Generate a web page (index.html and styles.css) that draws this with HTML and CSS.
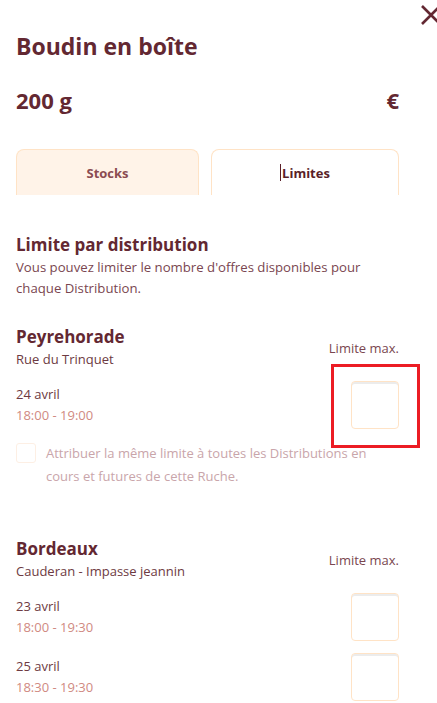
FILE: index.html
```html
<!DOCTYPE html>
<html lang="fr">
<head>
    <meta charset="UTF-8">
    <meta name="viewport" content="width=device-width, initial-scale=1.0">
    <title>Boudin en boîte</title>
    <link rel="stylesheet" href="styles.css">
</head>
<body>
    <button class="close-button" aria-label="Fermer">
        <svg width="26" height="26" viewBox="0 0 26 26">
            <path d="M4 4 L22 22 M22 4 L4 22" stroke="#632832" stroke-width="2.6" fill="none"/>
        </svg>
    </button>

    <div class="panel">
        <h1 class="product-title">Boudin en boîte</h1>
        <div class="price-row">
            <span>200 g</span>
            <span>€</span>
        </div>

        <div class="tabs">
            <div class="tab">Stocks</div>
            <div class="tab tab-active"><span class="caret"></span>Limites</div>
        </div>

        <h2 class="section-title">Limite par distribution</h2>
        <p class="section-text">Vous pouvez limiter le nombre d'offres disponibles pour chaque Distribution.</p>

        <div class="hive">
            <div class="hive-head">
                <div>
                    <div class="hive-name">Peyrehorade</div>
                    <div class="hive-address">Rue du Trinquet</div>
                </div>
                <div class="limit-label">Limite max.</div>
            </div>
            <div class="sale-row">
                <div>
                    <div class="sale-date">24 avril</div>
                    <div class="sale-time">18:00 - 19:00</div>
                </div>
                <div class="limit-box highlighted">
                    <input type="text" class="limit-input">
                </div>
            </div>
            <label class="same-limit">
                <span class="fake-check"></span>
                <span>Attribuer la même limite à toutes les Distributions en cours et futures de cette Ruche.</span>
            </label>
        </div>

        <div class="hive hive-second">
            <div class="hive-head">
                <div>
                    <div class="hive-name">Bordeaux</div>
                    <div class="hive-address">Cauderan - Impasse jeannin</div>
                </div>
                <div class="limit-label">Limite max.</div>
            </div>
            <div class="sale-row">
                <div>
                    <div class="sale-date">23 avril</div>
                    <div class="sale-time">18:00 - 19:30</div>
                </div>
                <div class="limit-box">
                    <input type="text" class="limit-input">
                </div>
            </div>
            <div class="sale-row sale-row-next">
                <div>
                    <div class="sale-date">25 avril</div>
                    <div class="sale-time">18:30 - 19:30</div>
                </div>
                <div class="limit-box">
                    <input type="text" class="limit-input">
                </div>
            </div>
        </div>
    </div>
</body>
</html>
```

FILE: styles.css
```css
body {
    margin: 0;
    background-color: white;
    font-family: "Open Sans", "Noto Sans", sans-serif;
    color: #632832;
    overflow: hidden;
}
.close-button {
    position: absolute;
    top: 2px;
    left: 418px;
    padding: 0;
    border: none;
    background: none;
    cursor: pointer;
}
.panel {
    width: 383px;
    padding: 0 16px;
}
.product-title {
    margin: 30px 0 0;
    font-size: 23px;
    line-height: 32px;
    font-weight: bold;
}
.price-row {
    display: flex;
    justify-content: space-between;
    margin-top: 23px;
    font-size: 22px;
    line-height: 30px;
    font-weight: bold;
}
.tabs {
    display: grid;
    grid-template-columns: 183px 1fr;
    gap: 12px;
    margin-top: 34px;
}
.tab {
    height: 46px;
    display: flex;
    align-items: center;
    justify-content: center;
    background-color: #fff3e8;
    border: 1px solid #ffe3c6;
    border-bottom: none;
    border-radius: 8px 8px 0 0;
    font-size: 13px;
    font-weight: bold;
    color: #8b4b51;
    box-sizing: border-box;
}
.tab-active {
    background-color: white;
    color: #5a1f29;
}
.caret {
    display: inline-block;
    width: 1px;
    height: 17px;
    background-color: #5a1f29;
    margin-right: 1px;
}
.section-title {
    margin: 38px 0 0;
    font-size: 17px;
    line-height: 24px;
    font-weight: bold;
}
.section-text {
    margin: 0;
    font-size: 13.2px;
    line-height: 21px;
    color: #7a4650;
}
.hive {
    margin-top: 26px;
}
.hive-second {
    margin-top: 49px;
}
.hive-head {
    display: flex;
    justify-content: space-between;
    align-items: center;
}
.hive-name {
    font-size: 17px;
    line-height: 24px;
    font-weight: bold;
}
.hive-address {
    font-size: 13px;
    line-height: 21px;
    color: #6d3a42;
}
.limit-label {
    font-size: 13px;
    color: #7a4650;
}
.sale-row {
    display: flex;
    justify-content: space-between;
    align-items: center;
    margin-top: 11px;
}
.sale-row-next {
    margin-top: 12px;
}
.sale-date {
    font-size: 13px;
    line-height: 21px;
    color: #6d3a42;
}
.sale-time {
    font-size: 13px;
    line-height: 21px;
    color: #d08a82;
}
.limit-box {
    position: relative;
    display: flex;
}
.limit-input {
    width: 48px;
    height: 48px;
    box-sizing: border-box;
    border: 1px solid #ffe3c6;
    border-radius: 4px;
    box-shadow: inset 0 2px 0 #ececec;
    background-color: white;
}
.highlighted::after {
    content: "";
    position: absolute;
    top: -17px;
    left: -20px;
    right: -21px;
    bottom: -19px;
    border: 3px solid #ec1c24;
}
.same-limit {
    display: flex;
    gap: 10px;
    margin-top: 13px;
    font-size: 13px;
    line-height: 23px;
    color: #c9a5aa;
}
.fake-check {
    flex-shrink: 0;
    width: 20px;
    height: 20px;
    margin-top: 1px;
    box-sizing: border-box;
    border: 1px solid #fdefe4;
    border-radius: 3px;
}
```
